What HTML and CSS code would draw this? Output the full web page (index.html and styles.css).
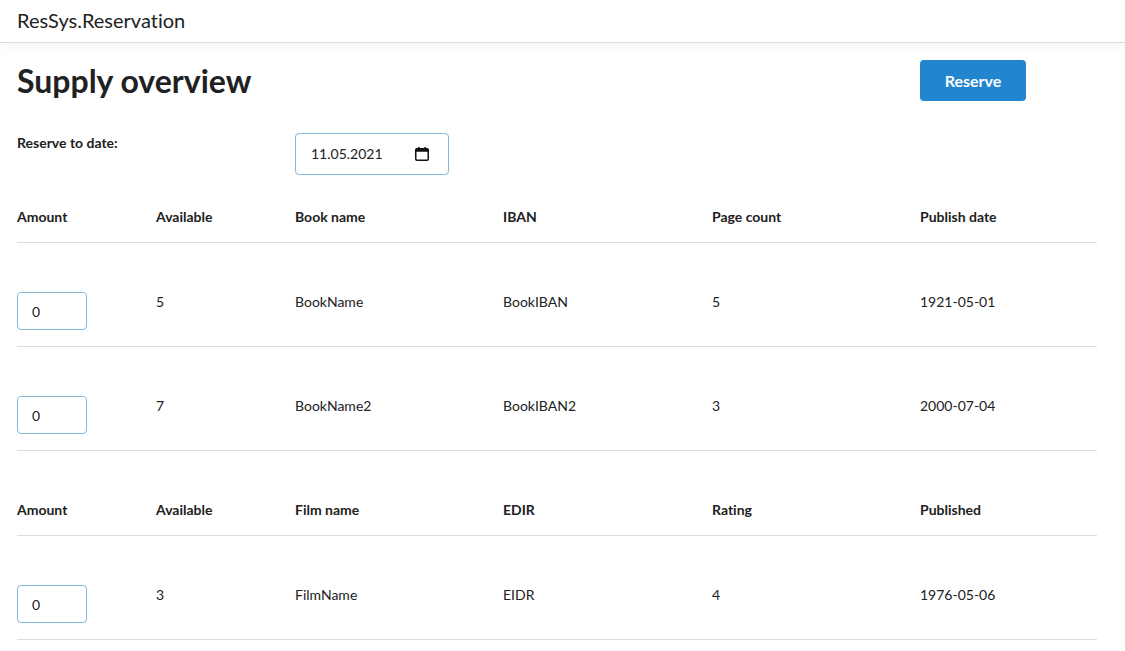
FILE: index.html
```html
<!DOCTYPE html>
<html lang="en">
<head>
<meta charset="utf-8">
<title>ResSys.Reservation</title>
<link rel="stylesheet" href="styles.css">
</head>
<body>
<header class="topbar">ResSys.Reservation</header>
<main class="page">
  <div class="grid title-row">
    <h1 class="title">Supply overview</h1>
    <button class="btn-primary" type="button">Reserve</button>
  </div>
  <div class="grid date-row">
    <label class="date-label">Reserve to date:</label>
    <div class="date-field">
      <span>11.05.2021</span>
      <svg class="cal-icon" width="16" height="16" viewBox="0 0 16 16" aria-hidden="true">
        <rect x="1.75" y="2.75" width="12.5" height="11.5" rx="1.2" fill="none" stroke="#111" stroke-width="1.5"/>
        <rect x="1.75" y="2.75" width="12.5" height="3" fill="#111"/>
        <rect x="4" y="1" width="1.6" height="2.5" fill="#111"/>
        <rect x="10.4" y="1" width="1.6" height="2.5" fill="#111"/>
      </svg>
    </div>
  </div>

  <div class="grid table-head first">
    <div>Amount</div><div>Available</div><div>Book name</div><div>IBAN</div><div>Page count</div><div>Publish date</div>
  </div>
  <div class="grid table-row">
    <div><input class="amount" type="text" value="0"></div><div>5</div><div>BookName</div><div>BookIBAN</div><div>5</div><div>1921-05-01</div>
  </div>
  <div class="grid table-row">
    <div><input class="amount" type="text" value="0"></div><div>7</div><div>BookName2</div><div>BookIBAN2</div><div>3</div><div>2000-07-04</div>
  </div>

  <div class="grid table-head">
    <div>Amount</div><div>Available</div><div>Film name</div><div>EDIR</div><div>Rating</div><div>Published</div>
  </div>
  <div class="grid table-row">
    <div><input class="amount" type="text" value="0"></div><div>3</div><div>FilmName</div><div>EIDR</div><div>4</div><div>1976-05-06</div>
  </div>
</main>
</body>
</html>
```
FILE: styles.css
```css
* { box-sizing: border-box; }
html, body { margin: 0; padding: 0; background: #fff; }
body {
  font-family: Lato, "Noto Sans", sans-serif;
  font-size: 14px;
  line-height: 20px;
  color: #212121;
  font-variant-ligatures: none;
}
.topbar {
  height: 43px;
  line-height: 40px;
  padding-left: 17px;
  font-size: 20px;
  border-bottom: 1px solid #dcdcdc;
  box-shadow: 0 2px 10px rgba(0,0,0,0.05);
  color: #222;
}
.page { padding: 17px 28px 0 17px; }
.grid {
  display: grid;
  grid-template-columns: 139px 139px 208px 209px 208px 177px;
}
.title-row { align-items: center; height: 41px; }
.title {
  grid-column: 1 / 6;
  margin: 0;
  font-size: 32px;
  line-height: 38px;
  font-weight: 700;
  color: #212121;
}
.btn-primary {
  grid-column: 6;
  width: 106px;
  height: 41px;
  border: 0;
  border-radius: 4px;
  background: #2185d0;
  color: #fff;
  font-family: Lato, "Noto Sans", sans-serif;
  font-weight: 700;
  font-size: 16px;
  padding: 0;
}
.date-row { margin-top: 32px; align-items: start; }
.date-label { grid-column: 1 / 3; font-weight: 700; }
.date-field {
  grid-column: 3;
  width: 154px;
  height: 42px;
  border: 1px solid #85b7d9;
  border-radius: 4px;
  padding: 0 18px 0 15px;
  display: flex;
  align-items: center;
  justify-content: space-between;
  font-size: 14px;
  color: #222;
}
.cal-icon { display: block; }
.table-head {
  padding: 49px 0 15px;
  border-bottom: 1px solid #dedede;
  font-weight: 700;
}
.table-head.first { padding-top: 32px; }
.table-row {
  padding: 49px 0 16px;
  border-bottom: 1px solid #dedede;
  align-items: start;
}
.amount {
  display: block;
  width: 70px;
  height: 38px;
  border: 1px solid #85b7d9;
  border-radius: 4px;
  padding: 0 14px;
  font-family: Lato, "Noto Sans", sans-serif;
  font-size: 14px;
  color: #222;
  background: #fff;
  outline: none;
}
```
